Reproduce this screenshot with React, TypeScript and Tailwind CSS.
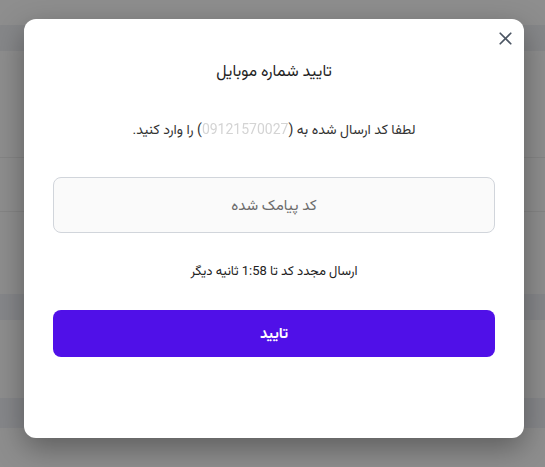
import React from 'react';
import { X } from 'lucide-react';

const rows = [
    'h-[25px]',
    'h-[26px] bg-[#868789]',
    'h-[106px]',
    'h-px bg-[#858585]',
    'h-[53px]',
    'h-px bg-[#858585]',
    'h-[82px]',
    'h-[26px] bg-[#86878a]',
    'h-[78px]',
    'h-[30px] bg-[#86878a]',
];

const App: React.FC = () => {
    return (
        <div className="relative w-[545px] h-[467px] overflow-hidden bg-[#8e8e8e] font-['Roboto','Vazirmatn','DejaVu_Sans',sans-serif]">
            {/* dimmed page behind the modal */}
            <div className="flex flex-col">
                {rows.map((r, i) => (
                    <div key={i} className={r}></div>
                ))}
            </div>

            <div className="absolute inset-0 pt-[19px] pl-[24px]">
                <div dir="rtl" className="relative w-[500px] h-[419px] bg-white rounded-xl shadow-[0_10px_30px_rgba(0,0,0,0.35)] px-[29px] pt-[40px] flex flex-col items-center">
                    <button className="absolute top-[9px] right-[8px] text-[#4b5563]">
                        <X size={21} strokeWidth={2} />
                    </button>

                    <h2 className="text-[16px] font-normal text-[#1f1f1f] leading-6 h-[26px]">تایید شماره موبایل</h2>

                    <p className="mt-[34px] text-[14px] text-[#333] leading-5">
                        لطفا کد ارسال شده به (
                        <span className="text-[#d4d4d4] blur-[0.4px]">09121570027</span>
                        ) را وارد کنید.
                    </p>

                    <input
                        className="mt-[38px] w-full h-[56px] rounded-lg border border-[#d1d5db] bg-[#fafafa] text-center text-[15px] text-[#333] placeholder:text-[#6b6b6b] outline-none"
                        placeholder="کد پیامک شده"
                    />

                    <p className="mt-[28px] text-[13px] text-[#222] leading-5">ارسال مجدد کد تا 1:58 ثانیه دیگر</p>

                    <button className="mt-[29px] w-full h-[47px] rounded-lg bg-[#5010e8] text-white text-[15px] font-bold">
                        تایید
                    </button>
                </div>
            </div>
        </div>
    );
};

export default App;
